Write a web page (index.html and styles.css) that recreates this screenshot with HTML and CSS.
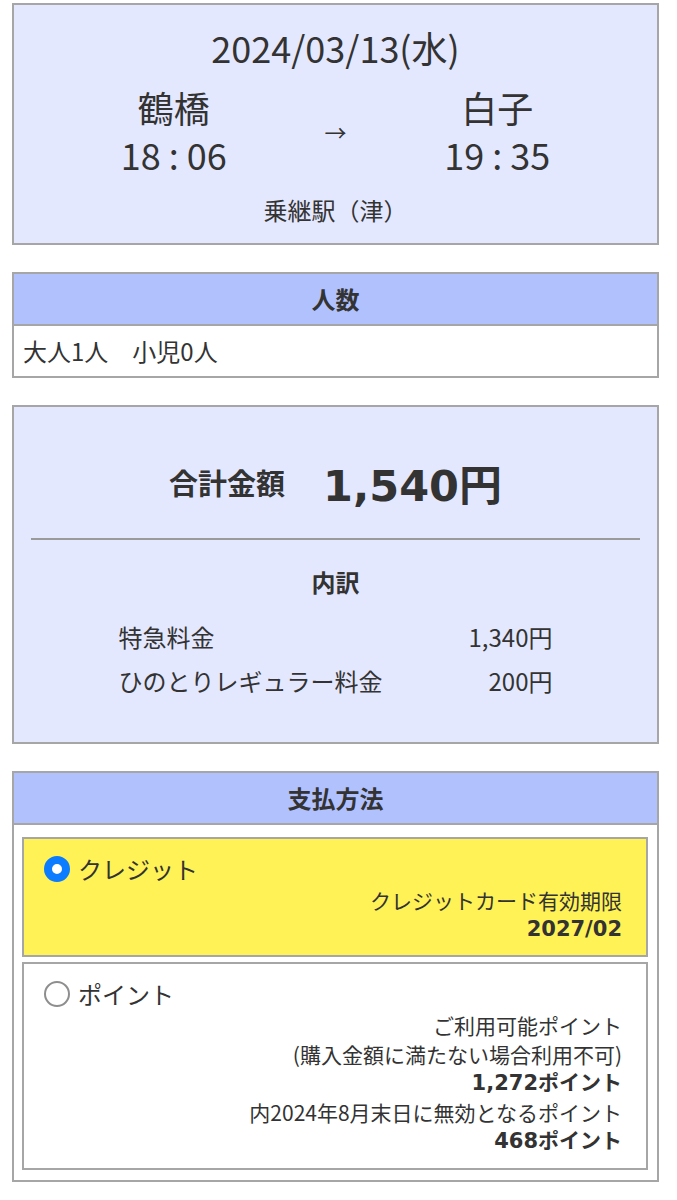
FILE: index.html
```html
<!DOCTYPE html>
<html lang="ja">
<head>
  <meta charset="UTF-8">
  <meta name="viewport" content="width=device-width, initial-scale=1.0">
  <title>購入内容確認</title>
  <link rel="stylesheet" href="styles.css">
</head>
<body>
  <main class="page">
    <!-- 乗車区間 -->
    <section class="card card--route">
      <p class="route-date">2024/03/13(水)</p>
      <div class="route-row">
        <div class="route-stop">
          <span class="route-station">鶴橋</span>
          <span class="route-time">18 : 06</span>
        </div>
        <span class="route-arrow">→</span>
        <div class="route-stop">
          <span class="route-station">白子</span>
          <span class="route-time">19 : 35</span>
        </div>
      </div>
      <p class="route-transfer">乗継駅（津）</p>
    </section>

    <!-- 人数 -->
    <section class="card">
      <h2 class="card-head">人数</h2>
      <div class="card-body">大人1人　小児0人</div>
    </section>

    <!-- 金額 -->
    <section class="card card--total">
      <div class="total-row">
        <span class="total-label">合計金額</span>
        <span class="total-price">1,540円</span>
      </div>
      <hr class="divider">
      <h3 class="breakdown-title">内訳</h3>
      <div class="breakdown">
        <div class="breakdown-row"><span>特急料金</span><span>1,340円</span></div>
        <div class="breakdown-row"><span>ひのとりレギュラー料金</span><span>200円</span></div>
      </div>
    </section>

    <!-- 支払方法 -->
    <section class="card">
      <h2 class="card-head">支払方法</h2>
      <div class="pay-list">
        <div class="pay-option is-selected">
          <div class="pay-label"><span class="radio radio--on"></span>クレジット</div>
          <div class="pay-detail">
            <p>クレジットカード有効期限</p>
            <p class="strong">2027/02</p>
          </div>
        </div>
        <div class="pay-option">
          <div class="pay-label"><span class="radio"></span>ポイント</div>
          <div class="pay-detail">
            <p>ご利用可能ポイント</p>
            <p>(購入金額に満たない場合利用不可)</p>
            <p class="strong">1,272ポイント</p>
            <p>内2024年8月末日に無効となるポイント</p>
            <p class="strong">468ポイント</p>
          </div>
        </div>
      </div>
    </section>
  </main>
</body>
</html>
```

FILE: styles.css
```css
:root {
  --text-color: #333;
  --border-color: #a6a6a6;
  --card-bg: #e4e8fe;
  --head-bg: #b1c1fe;
  --selected-bg: #fff256;
  --radio-blue: #0b7bff;
  --font-family: "Noto Sans CJK JP", "Noto Sans", sans-serif;
  /* bold numbers come out in a wider latin face */
  --number-font: "DejaVu Sans", "Noto Sans CJK JP", sans-serif;
}

* {
  margin: 0;
  padding: 0;
  box-sizing: border-box;
}

body {
  font-family: var(--font-family);
  color: var(--text-color);
  background: #fff;
}

.page {
  padding: 3px 18px 20px 12px;
}

/* Cards */
.card {
  border: 2px solid var(--border-color);
  background: #fff;
  margin-bottom: 27px;
}

.card-head {
  background: var(--head-bg);
  border-bottom: 2px solid var(--border-color);
  height: 52px;
  line-height: 50px;
  text-align: center;
  font-size: 24px;
  font-weight: bold;
}

.card-body {
  height: 50px;
  line-height: 50px;
  padding-left: 9px;
  font-size: 24px;
}

/* Route */
.card--route {
  background: var(--card-bg);
  padding: 20px 10px 16px;
  text-align: center;
}

.route-date {
  font-size: 36px;
  line-height: 44px;
}

.route-row {
  display: grid;
  grid-template-columns: 1fr 24px 1fr;
  align-items: center;
  margin-top: 15px;
}

.route-stop {
  display: flex;
  flex-direction: column;
}

.route-station,
.route-time {
  font-size: 36px;
  line-height: 47px;
}

.route-arrow {
  font-size: 22px;
  line-height: 30px;
}

.route-transfer {
  font-size: 24px;
  line-height: 34px;
  margin-top: 15px;
}

/* Total */
.card--total {
  background: var(--card-bg);
  padding: 43px 0 39px;
}

.total-row {
  display: flex;
  justify-content: center;
  align-items: center;
  gap: 38px;
  height: 64px;
}

.total-label {
  font-size: 29px;
  font-weight: bold;
}

.total-price {
  font-family: var(--number-font);
  font-size: 43px;
  font-weight: bold;
}

.divider {
  border: none;
  border-top: 2px solid #9a9a9a;
  margin: 24px 17px 0;
}

.breakdown-title {
  font-size: 24px;
  line-height: 34px;
  margin-top: 25px;
  text-align: center;
}

.breakdown {
  width: 434px;
  margin: 16px auto 0;
}

.breakdown-row {
  display: flex;
  justify-content: space-between;
  font-size: 24px;
  line-height: 44px;
}

/* Payment */
.pay-list {
  display: flex;
  flex-direction: column;
  gap: 5px;
  padding: 12px 9px 10px 8px;
}

.pay-option {
  border: 2px solid var(--border-color);
  padding: 13px 24px 12px 20px;
}

.pay-option.is-selected {
  background: var(--selected-bg);
  padding-bottom: 11px;
}

.pay-label {
  display: flex;
  align-items: center;
  gap: 8px;
  font-size: 24px;
  line-height: 34px;
}

.radio {
  width: 26px;
  height: 26px;
  border-radius: 50%;
  border: 2px solid #8e8e8e;
  background: #fff;
}

.radio--on {
  border: 8px solid var(--radio-blue);
}

.pay-detail {
  text-align: right;
  font-size: 21px;
  line-height: 29px;
}

.strong {
  font-family: var(--number-font);
  font-weight: bold;
}
```
